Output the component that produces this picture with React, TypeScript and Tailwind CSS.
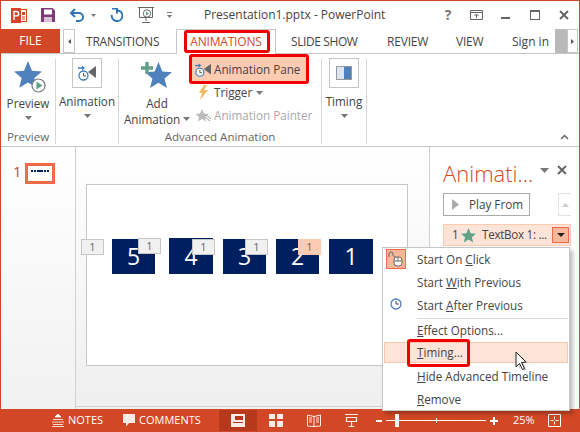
import React from 'react';

const Caret = ({ className = '' }: { className?: string }) => (
  <svg width="7" height="4" viewBox="0 0 7 4" className={className}>
    <path d="M0 0h7L3.500 4z" fill="#777" />
  </svg>
);

const AnimPaneIcon = ({ width = 18 }: { width?: number }) => (
  <svg width={width} height="16" viewBox="0 0 18 16">
    <path d="M0 3h6" stroke="#3f7cb8" strokeWidth="1.500" />
    <path d="M4 .5L7 3 4 5.500z" fill="#3f7cb8" />
    <circle cx="5.500" cy="10.500" r="4.500" fill="#fff" stroke="#3f7cb8" strokeWidth="1.300" />
    <path d="M5.500 8v3H8" fill="none" stroke="#555" />
    <path d="M10 7l8-6v12z" fill="#666" />
  </svg>
);

const Star = ({ size, color }: { size: number; color: string }) => (
  <svg width={size} height={size} viewBox="0 0 24 24">
    <path d="M12 0l3.400 8.400 8.600.7-6.600 5.500 2.100 8.400L12 18.400 4.500 23l2.100-8.400L0 9.100l8.600-.7z" fill={color} />
  </svg>
);

const LargeBox = ({ children }: { children: React.ReactNode }) => (
  <div className="-mt-[1px] flex h-[30px] w-[30px] items-center justify-center border border-[#c6c6c6] bg-white">{children}</div>
);

const Group = ({ label, width, children }: { label: string; width: string; children: React.ReactNode }) => (
  <div className={`flex h-[85px] shrink-0 flex-col border-r border-[#d6d6d6] ${width}`}>
    <div className="flex h-[70px] flex-1">{children}</div>
    {label ? <div className="text-center text-[11.5px] leading-[15px] text-[#666]">{label}</div> : null}
  </div>
);

const Tab = ({ label, className }: { label: string; className: string }) => (
  <div className={`pt-[1px] text-[12px] tracking-[-0.2px] text-[#444] ${className}`}>{label}</div>
);

const Badge = ({ left, top, peach }: { left: string; top: string; peach?: boolean }) => (
  <div
    className={`absolute flex h-[16px] w-[23px] items-center justify-center text-[11px] text-[#666] ${left} ${top} ${
      peach ? 'bg-[#fccbb2]' : 'border border-[#c6c6c6] bg-[#f0f0f0]'
    }`}
  >
    1
  </div>
);

const Block = ({ n, left, top, size }: { n: string; left: string; top: string; size: string }) => (
  <div className={`absolute flex items-center justify-center bg-[#001f5f] text-[23px] text-white ${left} ${top} ${size}`}>{n}</div>
);

const MenuRow = ({ children, hot }: { children: React.ReactNode; hot?: boolean }) => (
  <div
    className={`mx-[1px] flex items-center whitespace-pre text-[11.7px] text-[#444] ${
      hot ? 'mb-[2px] h-[21px] border border-[#f8c7ae] bg-[#fde4d9] pl-[32px]' : 'h-[23px] pl-[33px]'
    }`}
  >
    {children}
  </div>
);

export default function App() {
  return (
    <div className="flex h-[432px] w-[580px] flex-col overflow-hidden border-x border-t border-[#d24726] bg-white font-['Open_Sans',sans-serif]">
      {/* title bar */}
      <div className="flex h-[28px] shrink-0 items-center">
        <svg width="16" height="15" viewBox="0 0 16 15" className="ml-[10px]">
          <rect x="6.500" y="1.500" width="9" height="12" fill="#fff" stroke="#d24726" />
          <rect x="0" y="0" width="10" height="15" fill="#d24726" />
          <path d="M3 12V3.500h2.500a2 2 0 010 4.400H3" fill="none" stroke="#fff" strokeWidth="1.400" />
          <rect x="11" y="4" width="3" height="3" fill="#d24726" />
          <path d="M11 9h3M11 11h3" stroke="#d24726" />
        </svg>
        <svg width="14" height="14" viewBox="0 0 14 14" className="ml-[14px]">
          <path d="M0 0h11.500L14 2.500V14H0z" fill="#80397b" />
          <rect x="3" y="1.500" width="8" height="5" fill="#fff" />
          <rect x="3" y="9" width="8" height="5" fill="#d9c3d7" />
        </svg>
        <svg width="15" height="14" viewBox="0 0 15 14" className="ml-[14px]">
          <path d="M2 5h8a3.900 3.900 0 010 8H7" fill="none" stroke="#2f76b7" strokeWidth="2" />
          <path d="M6 1L2 5l4 4" fill="none" stroke="#2f76b7" strokeWidth="2" />
        </svg>
        <svg width="5" height="3" viewBox="0 0 5 3" className="ml-[7px]"><path d="M0 0h5L2.500 3z" fill="#777" /></svg>
        <svg width="13" height="14" viewBox="0 0 13 14" className="ml-[14px]">
          <path d="M8 2.500A5.300 5.300 0 111.800 7" fill="none" stroke="#2f76b7" strokeWidth="2" />
          <path d="M2 .5h5v5" fill="none" stroke="#2f76b7" strokeWidth="2" />
        </svg>
        <svg width="16" height="16" viewBox="0 0 16 16" className="ml-[15px]">
          <path d="M0 .5h16M1.500 1v9.500h13V1M8 10.500V14M4 15.500h8" fill="none" stroke="#666" />
          <circle cx="9" cy="6.500" r="3.700" fill="#fff" stroke="#666" />
          <path d="M8 4.500l3 2-3 2z" fill="#5fa287" />
        </svg>
        <svg width="5" height="7" viewBox="0 0 5 7" className="ml-[13px]">
          <path d="M0 .5h5" stroke="#777" />
          <path d="M0 3h5L2.500 6z" fill="#777" />
        </svg>
        <div className="ml-[32px] whitespace-nowrap text-[12px] text-[#444]">Presentation1.pptx - PowerPoint</div>
        <div className="ml-auto mr-[10px] flex items-center">
          <div className="flex w-[8px] justify-center text-[14px] font-bold leading-none text-[#777]">?</div>
          <svg width="13" height="10" viewBox="0 0 13 10" className="ml-[18px]">
            <path d="M.5 .5h12v9H.5zM1 2.500h11" fill="none" stroke="#666" />
            <path d="M6.500 8V4.500M4.500 6l2-2 2 2" fill="none" stroke="#666" />
          </svg>
          <div className="ml-[18px] mt-[6px] h-[2px] w-[9px] bg-[#666]" />
          <div className="ml-[20px] h-[10px] w-[10px] border border-t-2 border-[#666]" />
          <svg width="10" height="10" viewBox="0 0 10 10" className="ml-[19px]">
            <path d="M1 1l8 8M9 1L1 9" stroke="#666" strokeWidth="2" />
          </svg>
        </div>
      </div>

      {/* tabs */}
      <div className="relative flex h-[25px] shrink-0 items-center border-b border-[#c6c6c6]">
        <div className="flex h-[24px] w-[59px] items-center justify-center bg-[#d24726] text-[12px] text-white">FILE</div>
        <div className="ml-[3px] flex h-[24px] w-[12px] items-center justify-center border border-[#c6c6c6]">
          <svg width="3" height="5" viewBox="0 0 3 5"><path d="M3 0v5L0 2.500z" fill="#555" /></svg>
        </div>
        <Tab label="TRANSITIONS" className="ml-[11px] w-[90px]" />
        <div className="flex h-[25px] w-[100px] items-center justify-center border-x border-t border-[#c6c6c6] bg-white pt-[1px] text-[12px] tracking-[-0.2px] text-[#d24726]">
          ANIMATIONS
        </div>
        <Tab label="SLIDE SHOW" className="ml-[15px] w-[96px] tracking-[-0.4px]" />
        <Tab label="REVIEW" className="w-[69px]" />
        <Tab label="VIEW" className="w-[56px]" />
        <div className="w-[43px] pt-[1px] text-[12px] text-[#444]">Sign in</div>
        <div className="h-[24px] w-[12px] bg-[#b9b9b9]" />
        <div className="flex h-[24px] w-[11px] items-center justify-center border border-[#c6c6c6] bg-white">
          <svg width="3" height="5" viewBox="0 0 3 5"><path d="M0 0v5l3-2.500z" fill="#555" /></svg>
        </div>
        <div className="absolute left-[183px] top-[1px] h-[23px] w-[86px] rounded-[3px] border-[3px] border-[#f00000]" />
      </div>

      {/* ribbon */}
      <div className="relative flex h-[93px] shrink-0 items-start border-b border-[#c6c6c6] pt-[5px] text-[11.7px] text-[#444]">
        <Group label="Preview" width="w-[55px]">
          <div className="flex w-full flex-col items-center">
            <div className="relative h-[36px] w-[36px]">
              <div className="absolute left-[4px] top-[2px]"><Star size={28} color="#4f81bd" /></div>
              <svg width="15" height="15" viewBox="0 0 15 15" className="absolute left-[21px] top-[19px]">
                <circle cx="7.500" cy="7.500" r="6.500" fill="#fff" stroke="#777" strokeWidth="1.200" />
                <path d="M5.500 3.500l6 4-6 4z" fill="#5fa287" />
              </svg>
            </div>
            <div className="leading-[16px]">Preview</div>
            <Caret className="mt-[5px]" />
          </div>
        </Group>
        <Group label="" width="w-[63px]">
          <div className="flex w-full flex-col items-center">
            <LargeBox><AnimPaneIcon /></LargeBox>
            <div className="mt-[5px] leading-[16px]">Animation</div>
            <Caret className="mt-[5px]" />
          </div>
        </Group>
        <Group label="Advanced Animation" width="w-[203px]">
          <div className="flex w-[71px] flex-col items-center pl-[5px]">
            <div className="relative h-[36px] w-[40px]">
              <div className="absolute left-[8px] top-[3px]"><Star size={27} color="#4f81bd" /></div>
              <svg width="12" height="12" viewBox="0 0 14 14" className="absolute left-[4px] top-[3px]">
                <path d="M5 0h4v5h5v4H9v5H5V9H0V5h5z" fill="#5fa287" />
              </svg>
            </div>
            <div className="leading-[16px]">Add</div>
            <div className="flex items-center gap-[3px] whitespace-nowrap leading-[16px]">Animation <Caret /></div>
          </div>
          <div className="-mt-[2px] flex flex-1 flex-col">
            <div className="flex h-[24px] w-[116px] items-center gap-[3px] bg-[#fccbb2] pl-[5px] pt-[1px]"><AnimPaneIcon width={16} />Animation Pane</div>
            <div className="flex h-[23px] items-center gap-[3px] pl-[5px]">
              <span className="flex w-[16px] justify-center">
                <svg width="9" height="15" viewBox="0 0 9 15"><path d="M5 0L0 8h3l-2 7 8-10H5l3-5z" fill="#f4b860" /></svg>
              </span>
              Trigger
              <Caret className="ml-[1px]" />
            </div>
            <div className="flex h-[23px] items-center gap-[3px] pl-[5px] text-[#aaa]">
              <svg width="16" height="15" viewBox="0 0 16 15">
                <path d="M7 1l2 4.500 4.500.5-3.500 3 1 4.500-4-2.500-4 2.500 1-4.500L.5 6 5 5.500z" fill="#bbb" />
                <path d="M10 9l5 4M11 7l5 4" stroke="#999" />
              </svg>
              Animation Painter
            </div>
          </div>
        </Group>
        <Group label="" width="w-[45px]">
          <div className="flex w-full flex-col items-center">
            <LargeBox>
              <div className="flex h-[14px] w-[16px] border border-[#999] bg-[#dce6f1]">
                <div className="ml-auto h-full w-[7px] bg-[#4f81bd]" />
              </div>
            </LargeBox>
            <div className="mt-[5px] leading-[16px]">Timing</div>
            <Caret className="mt-[5px]" />
          </div>
        </Group>
        <svg width="9" height="6" viewBox="0 0 9 6" className="absolute bottom-[6px] right-[10px]">
          <path d="M1 5l3.500-3.500L8 5" fill="none" stroke="#666" strokeWidth="1.500" />
        </svg>
        <div className="absolute left-[188px] top-[0px] h-[30px] w-[120px] rounded-[3px] border-[3px] border-[#f00000]" />
      </div>

      {/* main */}
      <div className="flex min-h-0 flex-1">
        <div className="w-[75px] shrink-0 border-r border-[#d0d0d0] bg-gradient-to-b from-white to-[#f1f1f1]">
          <div className="ml-[12px] mt-[16px] flex items-center gap-[3px]">
            <span className="-mt-[5px] w-[9px] text-[15px] leading-none text-[#d24726]">1</span>
            <div className="flex h-[21px] w-[30px] items-center justify-center border-[3px] border-[#f0694a] bg-white pb-[5px]">
              <svg width="18" height="2" viewBox="0 0 18 2">
                <path d="M0 0h2v2H0zM3 0h2v2H3zM6 0h6v2H6zM13 0h2v2h-2zM16 0h2v2h-2z" fill="#001f5f" />
              </svg>
            </div>
          </div>
        </div>

        <div className="flex min-w-0 flex-1 flex-col bg-gradient-to-b from-white to-[#efefef]">
          <div className="relative flex-1 border-b border-[#d0d0d0]">
            <div className="absolute left-[10px] top-[37px] h-[182px] w-[322px] border border-[#c6c6c6] bg-white" />
            <Block n="5" left="left-[36px]" top="top-[92px]" size="h-[35px] w-[43px]" />
            <Block n="4" left="left-[93px]" top="top-[91px]" size="h-[36px] w-[44px]" />
            <Block n="3" left="left-[147px]" top="top-[92px]" size="h-[35px] w-[43px]" />
            <Block n="2" left="left-[200px]" top="top-[92px]" size="h-[35px] w-[43px]" />
            <Block n="1" left="left-[253px]" top="top-[92px]" size="h-[35px] w-[44px]" />
            <Badge left="left-[5px]" top="top-[92px]" />
            <Badge left="left-[62px]" top="top-[91px]" />
            <Badge left="left-[116px]" top="top-[92px]" />
            <Badge left="left-[169px]" top="top-[92px]" />
            <Badge left="left-[222px]" top="top-[92px]" peach />
          </div>
          <div className="h-[2px] shrink-0 bg-[#efefef]" />
        </div>

        <div className="w-[150px] shrink-0 border-l border-[#d0d0d0] bg-white pl-[13px]">
          <div className="mt-[11px] flex h-[30px] items-center">
            <span className="w-[97px] whitespace-nowrap text-[22px] font-light leading-none text-[#d24726]">Animati...</span>
            <svg width="9" height="5" viewBox="0 0 9 5" className="-mt-[6px]"><path d="M0 0h9L4.500 5z" fill="#777" /></svg>
            <svg width="10" height="10" viewBox="0 0 10 10" className="-mt-[6px] ml-[8px]">
              <path d="M1 1l8 8M9 1L1 9" stroke="#666" strokeWidth="2" />
            </svg>
          </div>
          <div className="mt-[5px] flex">
            <div className="flex h-[23px] w-[87px] items-center border border-[#aaa] pl-[8px] text-[11.7px] text-[#444]">
              <svg width="7" height="11" viewBox="0 0 7 11" className="mr-[10px]"><path d="M0 0l7 5.500L0 11z" fill="#aaa" /></svg>
              Play From
            </div>
            <div className="ml-[28px] flex h-[23px] w-[13px] items-center justify-center border-y border-l border-[#e2e2e2]">
              <svg width="7" height="4" viewBox="0 0 7 4"><path d="M0 4h7L3.500 0z" fill="#ccc" /></svg>
            </div>
          </div>
          <div className="mt-[8px] flex h-[22px] w-[128px] items-center border border-[#fccbb2] bg-[#fde4d9] pl-[8px] text-[11.7px] text-[#444]">
            <span className="w-[7px]">1</span>
            <span className="ml-[2px]"><Star size={15} color="#5fa287" /></span>
            <span className="ml-[6px] w-[70px] whitespace-nowrap tracking-[-0.3px]">TextBox 1: ...</span>
            <div className="flex h-[16px] w-[17px] items-center justify-center border border-[#f0694a] bg-[#f7b79a]">
              <svg width="8" height="4" viewBox="0 0 8 4"><path d="M0 0h8L4 4z" fill="#222" /></svg>
            </div>
          </div>
        </div>
      </div>

      {/* status bar */}
      <div className="flex h-[23px] shrink-0 items-center bg-[#d24726] text-[11px] text-white">
        <svg width="12" height="13" viewBox="0 0 12 13" className="ml-[51px]">
          <path d="M6 0l3 3H3zM1 5.500h10M0 8h12M1 10.500h10M0 12.500h12" fill="#fff" stroke="#fff" strokeWidth=".8" />
        </svg>
        <span className="ml-[4px] w-[55px]">NOTES</span>
        <svg width="12" height="13" viewBox="0 0 12 13">
          <path d="M0 0h12v9H6l-3 3.500V9H0z" fill="#fbeae5" />
        </svg>
        <span className="ml-[4px] w-[80px]">COMMENTS</span>
        <div className="flex h-[21px] w-[38px] items-center justify-center bg-[#b7391b]">
          <svg width="14" height="13" viewBox="0 0 14 13">
            <path d="M0 0h14v13H0z" fill="#fbeae5" />
            <rect x="4" y="2" width="8" height="4" fill="#b7391b" />
            <rect x="2" y="8" width="10" height="1" fill="#b7391b" />
          </svg>
        </div>
        <svg width="14" height="13" viewBox="0 0 14 13" className="ml-[12px]">
          <path d="M0 0h6v5H0zM8 0h6v5H8zM0 7h6v6H0zM8 7h6v6H8z" fill="#fbeae5" />
        </svg>
        <svg width="14" height="13" viewBox="0 0 14 13" className="ml-[24px]">
          <path d="M.5 1L7 2.500 13.500 1v11L7 12.500.5 12zM7 2v10M2 4h3M2 6h3M2 8h3M9 4h3M9 6h3M9 8h3" fill="none" stroke="#fbeae5" />
        </svg>
        <svg width="14" height="13" viewBox="0 0 14 13" className="ml-[24px]">
          <path d="M0 .5h13M1.500 3.500h10v4h-10zM6.500 8v4M3.500 12.500h6" fill="none" stroke="#fbeae5" strokeWidth="1.200" />
        </svg>
        <div className="ml-[17px] h-[2px] w-[6px] bg-white" />
        <div className="relative ml-[4px] h-[1px] w-[100px] bg-white">
          <div className="absolute left-[9px] top-[-6px] h-[13px] w-[4px] bg-white" />
          <div className="absolute left-[50px] top-[-2px] h-[5px] w-[1px] bg-white" />
        </div>
        <svg width="8" height="8" viewBox="0 0 8 8" className="ml-[4px]"><path d="M4 0v8M0 4h8" stroke="#fff" strokeWidth="2" /></svg>
        <span className="ml-[15px] w-[35px]">25%</span>
        <svg width="13" height="13" viewBox="0 0 13 13">
          <path d="M.5 .5h12v12H.5zM6.500 2.500v3M6.500 7.500v3M2.500 6.500h3M7.500 6.500h3" fill="none" stroke="#fff" />
        </svg>
      </div>

      {/* context menu */}
      <div className="absolute left-[382px] top-[247px] h-[164px] w-[188px] border border-[#c6c6c6] bg-white shadow-[3px_3px_4px_rgba(0,0,0,0.25)]">
        <div className="absolute left-[3px] top-[1px] flex h-[20px] w-[20px] items-center justify-center border border-[#f0694a] bg-[#f7b79a]">
          <svg width="16" height="16" viewBox="0 0 16 16">
            <path d="M1 6V3a2 2 0 014 0v1c0 1 1 2 3 2" fill="none" stroke="#666" />
            <rect x="6" y="6" width="8" height="9" rx="3" fill="#fff" stroke="#666" />
            <path d="M6 10h8M10 6v4" stroke="#666" />
          </svg>
        </div>
        <MenuRow>Start On <u>C</u>lick</MenuRow>
        <MenuRow>Start <u>W</u>ith Previous</MenuRow>
        <MenuRow>Start <u>A</u>fter Previous</MenuRow>
        <svg width="12" height="12" viewBox="0 0 12 12" className="absolute left-[7px] top-[50px]">
          <circle cx="6" cy="6" r="5" fill="#fff" stroke="#4f81bd" strokeWidth="1.300" />
          <path d="M6 3v3h3" fill="none" stroke="#444" />
        </svg>
        <div className="ml-[34px] mr-[1px] mt-[1px] h-px bg-[#d8d8d8]" />
        <MenuRow><u>E</u>ffect Options...</MenuRow>
        <MenuRow hot><u>T</u>iming...</MenuRow>
        <MenuRow><u>H</u>ide Advanced Timeline</MenuRow>
        <MenuRow><u>R</u>emove</MenuRow>
        <div className="absolute left-[24px] top-[91px] h-[28px] w-[63px] rounded-[3px] border-[3px] border-[#f00000]" />
        <svg width="15" height="21" viewBox="0 0 15 21" className="absolute left-[131px] top-[103px]">
          <path d="M4 17L1 1l12 10-5 .5 3 6-2.500 1.500-3-6z" fill="#999" opacity=".5" transform="translate(1.500 1)" />
          <path d="M2 16V1l10 10-4.500.5 3 6-2 1-3-6z" fill="#fff" stroke="#222" />
        </svg>
      </div>
    </div>
  );
}
